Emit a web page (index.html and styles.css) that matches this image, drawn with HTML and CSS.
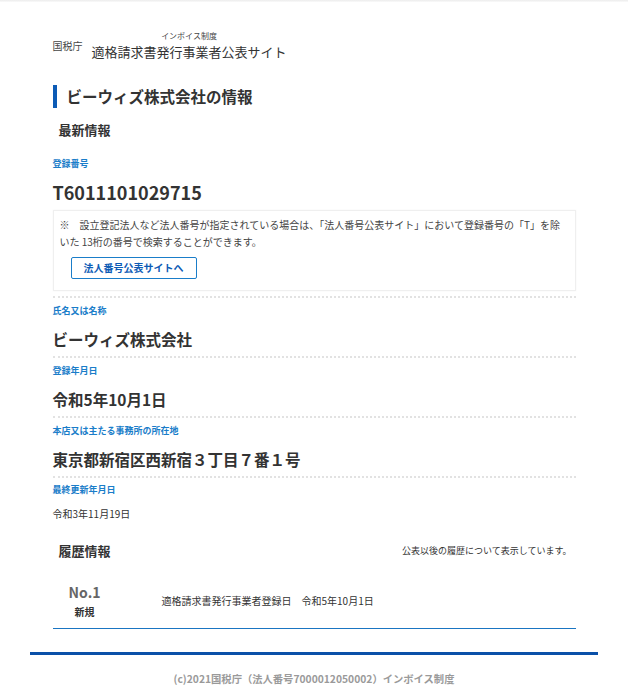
FILE: index.html
```html
<!DOCTYPE html>
<html lang="ja">
<head>
<meta charset="utf-8">
<title>ビーウィズ株式会社の情報</title>
<link rel="stylesheet" href="styles.css">
</head>
<body>
<div class="topbar"></div>
<header class="site-header">
  <div class="brand">
    <span class="agency">国税庁</span>
    <div class="site-name">
      <span class="site-sub">インボイス制度</span>
      <span class="site-title">適格請求書発行事業者公表サイト</span>
    </div>
  </div>
</header>

<main class="content">
  <h1 class="page-title">ビーウィズ株式会社の情報</h1>
  <h2 class="section-title">最新情報</h2>

  <div class="field field-first">
    <div class="label">登録番号</div>
    <div class="value value-num">T6011101029715</div>
    <div class="note">
      <p class="note-text">※　設立登記法人など法人番号が指定されている場合は、「法人番号公表サイト」において登録番号の「T」を除いた 13桁の番号で検索することができます。</p>
      <a class="btn" href="#">法人番号公表サイトへ</a>
    </div>
  </div>

  <div class="field">
    <div class="label">氏名又は名称</div>
    <div class="value">ビーウィズ株式会社</div>
  </div>

  <div class="field">
    <div class="label">登録年月日</div>
    <div class="value">令和5年10月1日</div>
  </div>

  <div class="field">
    <div class="label">本店又は主たる事務所の所在地</div>
    <div class="value">東京都新宿区西新宿３丁目７番１号</div>
  </div>

  <div class="field field-last">
    <div class="label">最終更新年月日</div>
    <div class="value-small">令和3年11月19日</div>
  </div>

  <div class="history-head">
    <h2 class="section-title">履歴情報</h2>
    <span class="history-note">公表以後の履歴について表示しています。</span>
  </div>

  <div class="history-row">
    <div class="history-no">
      <span class="no">No.1</span>
      <span class="kind">新規</span>
    </div>
    <div class="history-body">適格請求書発行事業者登録日　令和5年10月1日</div>
  </div>
</main>

<footer class="site-footer">
  <p class="copyright">(c)2021国税庁（法人番号7000012050002）インボイス制度</p>
</footer>
</body>
</html>
```

FILE: styles.css
```css
* { box-sizing: border-box; }

body {
  margin: 0;
  background: #fff;
  color: #333;
  font-family: "Noto Sans CJK JP", sans-serif;
}

.topbar {
  height: 2px;
  background: linear-gradient(#ececec, #fafafa);
}

.site-header {
  width: 523px;
  margin: 0 auto;
  padding-top: 28px;
}

.brand {
  display: flex;
  align-items: center;
  gap: 9px;
}

.agency {
  font-size: 10px;
  line-height: 14px;
  color: #444;
}

.site-name {
  display: flex;
  flex-direction: column;
  align-items: center;
}

.site-sub {
  font-size: 8px;
  line-height: 12px;
  color: #444;
}

.site-title {
  font-size: 13px;
  line-height: 20px;
  color: #333;
}

.content {
  width: 523px;
  margin: 0 auto;
}

.page-title {
  margin: 23px 0 0;
  border-left: 4px solid #0d5bb5;
  padding-left: 10px;
  font-size: 15.5px;
  line-height: 23px;
  font-weight: bold;
  color: #333;
}

.section-title {
  margin: 12px 0 0;
  padding-left: 6px;
  font-size: 13px;
  line-height: 20px;
  font-weight: bold;
  color: #333;
}

.field {
  padding: 6px 0 5px;
  border-bottom: 2px dotted #e2e2e2;
}

.field-first {
  padding-top: 17px;
  padding-bottom: 5px;
}

.field-last {
  border-bottom: none;
  padding-top: 5px;
}

.label {
  font-size: 9px;
  line-height: 14px;
  font-weight: bold;
  color: #1a7dc9;
}

.value {
  margin-top: 9px;
  font-size: 15.5px;
  line-height: 24px;
  font-weight: bold;
  color: #333;
}

.value-num {
  font-size: 18px;
}

.value-small {
  margin-top: 9px;
  font-size: 10px;
  line-height: 16px;
  color: #333;
}

.note {
  margin-top: 6px;
  border: 1px solid #efefef;
  box-shadow: 0 0 2px rgba(0, 0, 0, 0.04);
  padding: 5px 8px 11px 6px;
}

.note-text {
  margin: 0;
  font-size: 10px;
  line-height: 17px;
  color: #444;
}

.btn {
  display: inline-block;
  margin: 7px 0 0 11px;
  padding: 0 12px;
  height: 22px;
  line-height: 20px;
  border: 1px solid #1a7dc9;
  border-radius: 2px;
  font-size: 10px;
  font-weight: bold;
  color: #0d5bb5;
  text-decoration: none;
}

.history-head {
  display: flex;
  justify-content: space-between;
  align-items: center;
  margin-top: 14px;
}

.history-head .section-title {
  margin: 0;
}

.history-note {
  padding-right: 4px;
  font-size: 9px;
  line-height: 20px;
  color: #333;
}

.history-row {
  display: flex;
  align-items: center;
  margin-top: 21px;
  padding-bottom: 8px;
  border-bottom: 1px solid #1a75c2;
}

.history-no {
  width: 64px;
  display: flex;
  flex-direction: column;
  align-items: center;
}

.no {
  font-size: 14px;
  line-height: 20px;
  font-weight: bold;
  color: #666;
}

.kind {
  margin-top: 2px;
  font-size: 10px;
  line-height: 16px;
  font-weight: bold;
  color: #333;
}

.history-body {
  margin-left: 45px;
  font-size: 10px;
  line-height: 16px;
  color: #333;
}

.site-footer {
  width: 568px;
  margin: 23px auto 0;
  border-top: 3px solid #0a50a8;
}

.copyright {
  margin: 16px 0 0;
  text-align: center;
  font-size: 10.3px;
  line-height: 16px;
  font-weight: bold;
  color: #9a9a9a;
}
```
